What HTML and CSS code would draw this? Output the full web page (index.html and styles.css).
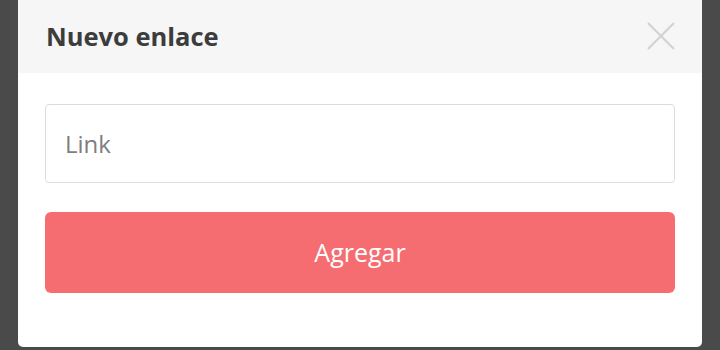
FILE: index.html
```html
<!DOCTYPE html>
<html lang="es">
<head>
  <meta charset="UTF-8">
  <title>Nuevo enlace</title>
  <link rel="stylesheet" href="styles.css">
</head>
<body>
  <div class="modal">
    <div class="modal-header">
      <h2>Nuevo enlace</h2>
      <button class="close" aria-label="Cerrar">
        <svg width="28" height="28" viewBox="0 0 28 28">
          <path d="M1 1 L27 27 M27 1 L1 27" stroke="#d3d3d3" stroke-width="2.2" fill="none"/>
        </svg>
      </button>
    </div>
    <div class="modal-body">
      <input type="text" class="link-input" placeholder="Link">
      <button class="add-btn">Agregar</button>
    </div>
  </div>
</body>
</html>
```

FILE: styles.css
```css
body {
  margin: 0;
  background-color: #4a4a4a;
  font-family: "Open Sans", "Noto Sans", sans-serif;
  height: 350px;
  overflow: hidden;
}

.modal {
  margin: 0 18px;
  height: 347px;
  background-color: #fff;
  border-radius: 0 0 5px 5px;
  overflow: hidden;
}

.modal-header {
  height: 73px;
  background-color: #f6f6f6;
  display: flex;
  align-items: center;
  justify-content: space-between;
  padding: 0 27px 0 28px;
}

.modal-header h2 {
  margin: 0 0 2px;
  font-size: 25.5px;
  font-weight: 700;
  color: #3c3c3c;
}

.close {
  background: none;
  border: none;
  padding: 0;
  margin-bottom: 2px;
  display: flex;
  cursor: pointer;
}

.modal-body {
  padding: 31px 27px 0 27px;
  display: flex;
  flex-direction: column;
  gap: 29px;
}

.link-input {
  height: 79px;
  box-sizing: border-box;
  border: 1.5px solid #dcdcdc;
  border-radius: 4px;
  padding: 0 19px;
  font-family: inherit;
  font-size: 24px;
  color: #333;
  outline: none;
}

.link-input::placeholder {
  color: #7e7e7e;
}

.add-btn {
  height: 81px;
  border: none;
  border-radius: 6px;
  background-color: #f56d71;
  color: #fff;
  font-family: inherit;
  font-size: 25px;
  padding-bottom: 2px;
  cursor: pointer;
}
```
